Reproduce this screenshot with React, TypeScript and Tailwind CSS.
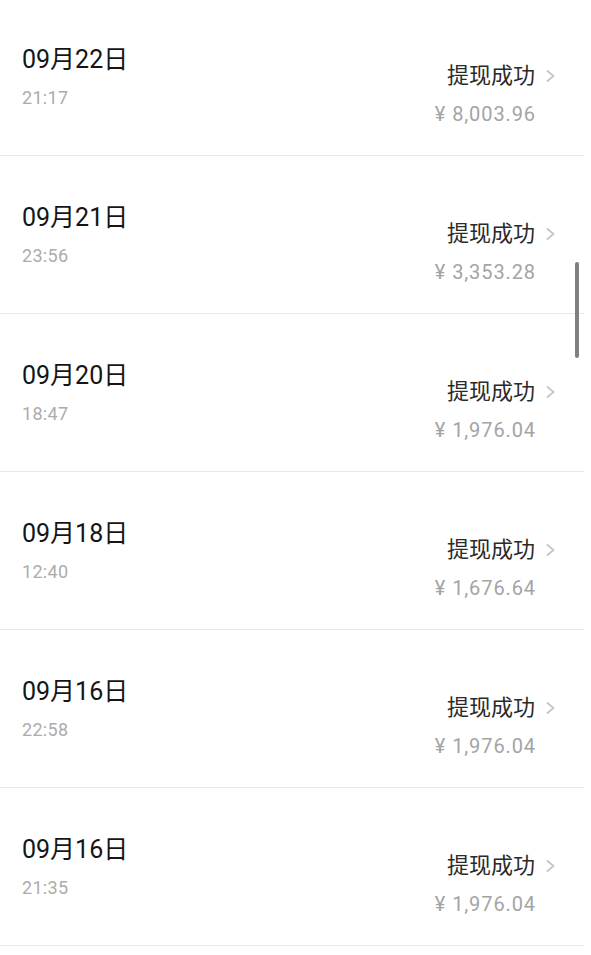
import React from "react";

const rows = [
  { date: "09月22日", time: "21:17", amount: "8,003.96" },
  { date: "09月21日", time: "23:56", amount: "3,353.28" },
  { date: "09月20日", time: "18:47", amount: "1,976.04" },
  { date: "09月18日", time: "12:40", amount: "1,676.64" },
  { date: "09月16日", time: "22:58", amount: "1,976.04" },
  { date: "09月16日", time: "21:35", amount: "1,976.04" },
];

function Chevron() {
  return (
    <svg width="11" height="14" viewBox="0 0 11 14" className="ml-[10px] shrink-0">
      <polyline points="2.5,2 8.5,7 2.5,12" fill="none" stroke="#c8c8c8" strokeWidth="2" strokeLinecap="round" strokeLinejoin="round" />
    </svg>
  );
}

export default function App() {
  return (
    <div
      className="relative w-[591px] h-[955px] overflow-hidden bg-white"
      style={{ fontFamily: 'Roboto, "Noto Sans CJK SC", sans-serif' }}
    >
      <div className="-mt-[2px] pr-[7px]">
        {rows.map((r, i) => (
          <div key={i} className="flex h-[158px] justify-between border-b border-[#e8e8e8]">
            <div className="pl-[22px] pt-[49px]">
              <div className="text-[25px] leading-[25px] text-[#151515]">{r.date}</div>
              <div className="mt-[17px] text-[18px] leading-[18px] tracking-[0.3px] text-[#acacac]">{r.time}</div>
            </div>
            <div className="pr-[28px] pt-[67px] flex flex-col items-end">
              <div className="flex items-center">
                <span className="text-[22px] leading-[22px] text-[#2a2a2a]">提现成功</span>
                <Chevron />
              </div>
              <div className="mt-[17px] pr-[20px] text-[20px] leading-[20px] tracking-[0.9px] text-[#a4a4a4]">
                ¥ {r.amount}
              </div>
            </div>
          </div>
        ))}
      </div>
      <div className="absolute left-[575px] top-[262px] h-[96px] w-[4px] rounded-full bg-[#808080]" />
    </div>
  );
}
